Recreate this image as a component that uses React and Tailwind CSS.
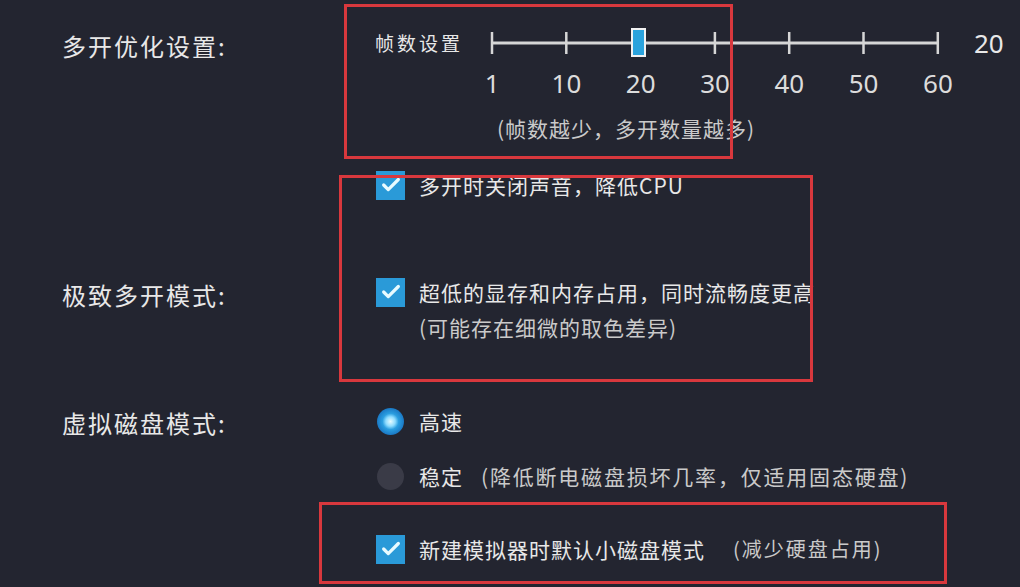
import { Check } from 'lucide-react'

const TICKS = ['1', '10', '20', '30', '40', '50', '60']

const font = "font-['Noto_Sans_CJK_SC','Noto_Sans',sans-serif]"

function CheckBox() {
  return (
    <div className="w-[29px] h-[29px] bg-[#2a9ad8] flex items-center justify-center flex-shrink-0">
      <Check size={22} strokeWidth={3.5} className="text-[#e8fbff]" />
    </div>
  )
}

function Radio({ on }) {
  return (
    <svg width="29" height="29" viewBox="0 0 29 29" className="flex-shrink-0">
      <defs>
        <radialGradient id="rg" cx="50%" cy="50%" r="50%">
          <stop offset="0%" stopColor="#e6fbff" />
          <stop offset="35%" stopColor="#8fdcff" />
          <stop offset="60%" stopColor="#2a9ee0" />
          <stop offset="100%" stopColor="#1a78c4" />
        </radialGradient>
      </defs>
      <circle cx="14.5" cy="14.5" r="13.5" fill={on ? 'url(#rg)' : '#3a3b47'} />
    </svg>
  )
}

function Slider() {
  // track 0..448, a tick every 74.3px, handle sits on 20
  const xs = TICKS.map((_, i) => 2 + i * 74.3)
  return (
    <svg width="452" height="30" viewBox="0 0 452 30" className="flex-shrink-0">
      <line x1="2" y1="15" x2="448" y2="15" stroke="#d6d6d6" strokeWidth="3" />
      {xs.map((x, i) => (
        <line key={i} x1={x} y1="4" x2={x} y2="26" stroke="#d6d6d6" strokeWidth="2.5" />
      ))}
      <rect x="142" y="1" width="13" height="27" fill="#2aa3dd" stroke="#f2f2f2" strokeWidth="2" />
    </svg>
  )
}

export default function App() {
  return (
    <div className={`w-[1020px] h-[587px] bg-[#232530] relative overflow-hidden text-[#e8e8e8] ${font}`}>

      {/* 多开优化设置 */}
      <div className="flex pl-[62px] pt-[28px]">
        <div className="w-[313px] text-[24px] tracking-[2px] leading-[30px] mt-[3px]">多开优化设置:</div>
        <div className="flex flex-col">
          <div className="flex items-center h-[30px]">
            <span className="w-[115px] text-[19px] tracking-[3px] leading-[30px]">帧数设置</span>
            <Slider />
            <span className="ml-[32px] text-[26px] leading-[30px] font-['Noto_Sans',sans-serif]">20</span>
          </div>
          <div className="flex ml-[80px] mt-[10px] font-['Noto_Sans',sans-serif] text-[26px] leading-[30px] text-[#dcdcdc]">
            {TICKS.map(t => (
              <span key={t} className="w-[74.3px] text-center">{t}</span>
            ))}
          </div>
          <div className="ml-[122px] mt-[18px] text-[21px] tracking-[1px] leading-[24px] text-[#cacaca]">
            (帧数越少，多开数量越多)
          </div>
          <div className="flex items-center gap-[14px] mt-[30px] ml-[1px]">
            <CheckBox />
            <span className="text-[21px] tracking-[1px] leading-[30px]">多开时关闭声音，降低CPU</span>
          </div>
        </div>
      </div>

      {/* 极致多开模式 */}
      <div className="flex pl-[62px] mt-[77px]">
        <div className="w-[313px] text-[24px] tracking-[2px] leading-[30px] mt-[3px]">极致多开模式:</div>
        <div className="flex flex-col">
          <div className="flex items-center gap-[14px] ml-[1px]">
            <CheckBox />
            <span className="text-[21px] tracking-[1px] leading-[30px]">超低的显存和内存占用，同时流畅度更高</span>
          </div>
          <div className="ml-[44px] mt-[8px] text-[21px] tracking-[1px] leading-[24px] text-[#cacaca]">
            (可能存在细微的取色差异)
          </div>
        </div>
      </div>

      {/* 虚拟磁盘模式 */}
      <div className="flex pl-[62px] mt-[67px]">
        <div className="w-[313px] text-[24px] tracking-[2px] leading-[30px] mt-[2px]">虚拟磁盘模式:</div>
        <div className="flex flex-col">
          <div className="flex items-center gap-[14px] ml-[1px]">
            <Radio on />
            <span className="text-[21px] tracking-[1px] leading-[30px]">高速</span>
          </div>
          <div className="flex items-center gap-[14px] ml-[1px] mt-[25px]">
            <Radio />
            <span className="text-[21px] tracking-[1px] leading-[30px]">稳定</span>
            <span className="ml-[4px] text-[21px] tracking-[1.8px] leading-[30px] text-[#cacaca]">(降低断电磁盘损坏几率，仅适用固态硬盘)</span>
          </div>
          <div className="flex items-center gap-[14px] ml-[1px] mt-[43px]">
            <CheckBox />
            <span className="text-[21px] tracking-[1px] leading-[30px]">新建模拟器时默认小磁盘模式</span>
            <span className="ml-[14px] text-[20px] tracking-[2px] leading-[30px] text-[#cacaca]">(减少硬盘占用)</span>
          </div>
        </div>
      </div>

      {/* red annotation boxes */}
      <div className="absolute left-[344px] top-[4px] w-[389px] h-[155px] border-[3px] border-[#d8383d]" />
      <div className="absolute left-[339px] top-[175px] w-[474px] h-[207px] border-[3px] border-[#d8383d]" />
      <div className="absolute left-[319px] top-[502px] w-[628px] h-[82px] border-[3px] border-[#d8383d]" />
    </div>
  )
}
